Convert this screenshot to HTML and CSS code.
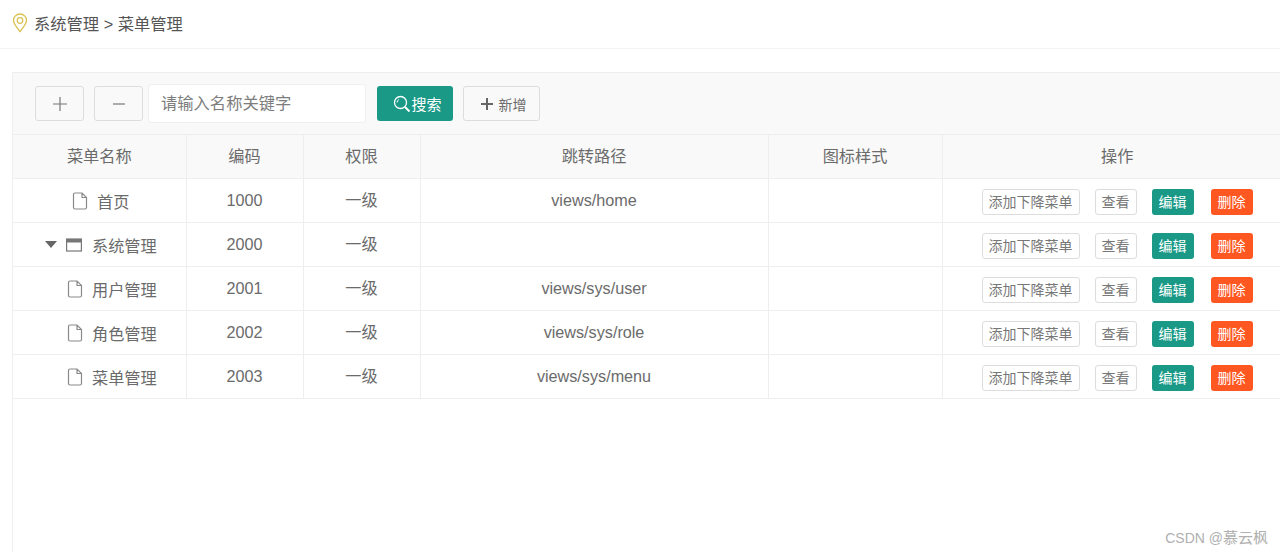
FILE: index.html
```html
<!DOCTYPE html>
<html lang="zh-CN">

<head>
    <meta charset="UTF-8">
    <title>菜单管理</title>
    <link rel="stylesheet" href="styles.css">
</head>

<body>
    <svg class="sprite" width="0" height="0">
        <symbol id="file" viewBox="0 0 16 18">
            <path d="M1.5 2.5a1.5 1.5 0 0 1 1.5-1.5h7l4.5 4.5v10a1.5 1.5 0 0 1-1.5 1.500h-10a1.500 1.500 0 0 1-1.500-1.500z M10 1v4.500h4.500" fill="none" stroke="#8a8a8a" stroke-width="1.200" />
        </symbol>
    </svg>

    <div class="crumb">
        <svg class="pin" width="16" height="20" viewBox="0 0 16 20">
            <path d="M8 18.500C5 14.500 1.500 11 1.500 7.500a6.500 6.500 0 0 1 13 0C14.500 11 11 14.500 8 18.500z" fill="none" stroke="#d9c14f" stroke-width="1.300" />
            <circle cx="8" cy="7.500" r="2.800" fill="none" stroke="#d9c14f" stroke-width="1.200" />
        </svg>
        <span>系统管理 &gt; 菜单管理</span>
    </div>

    <div class="panel">
        <div class="toolbar">
            <button class="btn btn-square">
                <svg width="16" height="16" viewBox="0 0 16 16"><path d="M8 1v14M1 8h14" stroke="#777" stroke-width="1.200" /></svg>
            </button>
            <button class="btn btn-square">
                <svg width="16" height="16" viewBox="0 0 16 16"><path d="M2 8h12" stroke="#777" stroke-width="1.200" /></svg>
            </button>
            <input class="search" type="text" placeholder="请输入名称关键字">
            <button class="btn-search">
                <svg width="18" height="18" viewBox="0 0 18 18">
                    <circle cx="7.500" cy="7.500" r="6" fill="none" stroke="#fff" stroke-width="1.300" />
                    <path d="M12 12l4.500 4.500" stroke="#fff" stroke-width="2" />
                    <path d="M4 7.500a3.500 3.500 0 0 1 2-3" fill="none" stroke="#fff" />
                </svg>
                搜索
            </button>
            <button class="btn btn-add">
                <svg width="14" height="14" viewBox="0 0 14 14"><path d="M7 1v12M1 7h12" stroke="#666" stroke-width="2" /></svg>
                新增
            </button>
        </div>

        <table class="grid">
            <colgroup>
                <col class="c1">
                <col class="c2">
                <col class="c3">
                <col class="c4">
                <col class="c5">
                <col>
            </colgroup>
            <thead>
                <tr>
                    <th>菜单名称</th>
                    <th>编码</th>
                    <th>权限</th>
                    <th>跳转路径</th>
                    <th>图标样式</th>
                    <th class="th-ops">操作</th>
                </tr>
            </thead>
            <tbody>
                <tr>
                    <td><div class="name name-top"><svg class="ico"><use href="#file" /></svg>首页</div></td>
                    <td>1000</td>
                    <td>一级</td>
                    <td>views/home</td>
                    <td></td>
                    <td><div class="ops"><a class="tag">添加下降菜单</a><a class="tag">查看</a><a class="tag tag-green">编辑</a><a class="tag tag-red">删除</a></div></td>
                </tr>
                <tr>
                    <td>
                        <div class="name">
                            <i class="caret"></i>
                            <svg class="ico-win" width="16" height="14" viewBox="0 0 16 14"><rect x="0.600" y="1" width="14.800" height="12" fill="none" stroke="#777" stroke-width="1.200" /><rect x="0.600" y="1" width="14.800" height="3.500" fill="#777" /></svg>
                            系统管理
                        </div>
                    </td>
                    <td>2000</td>
                    <td>一级</td>
                    <td></td>
                    <td></td>
                    <td><div class="ops"><a class="tag">添加下降菜单</a><a class="tag">查看</a><a class="tag tag-green">编辑</a><a class="tag tag-red">删除</a></div></td>
                </tr>
                <tr>
                    <td><div class="name"><svg class="ico"><use href="#file" /></svg>用户管理</div></td>
                    <td>2001</td>
                    <td>一级</td>
                    <td>views/sys/user</td>
                    <td></td>
                    <td><div class="ops"><a class="tag">添加下降菜单</a><a class="tag">查看</a><a class="tag tag-green">编辑</a><a class="tag tag-red">删除</a></div></td>
                </tr>
                <tr>
                    <td><div class="name"><svg class="ico"><use href="#file" /></svg>角色管理</div></td>
                    <td>2002</td>
                    <td>一级</td>
                    <td>views/sys/role</td>
                    <td></td>
                    <td><div class="ops"><a class="tag">添加下降菜单</a><a class="tag">查看</a><a class="tag tag-green">编辑</a><a class="tag tag-red">删除</a></div></td>
                </tr>
                <tr>
                    <td><div class="name"><svg class="ico"><use href="#file" /></svg>菜单管理</div></td>
                    <td>2003</td>
                    <td>一级</td>
                    <td>views/sys/menu</td>
                    <td></td>
                    <td><div class="ops"><a class="tag">添加下降菜单</a><a class="tag">查看</a><a class="tag tag-green">编辑</a><a class="tag tag-red">删除</a></div></td>
                </tr>
            </tbody>
        </table>
    </div>

    <div class="mark"><span class="mark-site">CSDN @</span>慕云枫</div>
</body>

</html>
```

FILE: styles.css
```css
* {
    box-sizing: border-box;
}

html,
body {
    height: 100%;
}

body {
    margin: 0;
    overflow: hidden;
    background-color: #fff;
    color: #6b6b6b;
    font-family: "Liberation Sans", "Noto Sans CJK SC", sans-serif;
    font-size: 16px;
}

.sprite {
    display: block;
}

.crumb {
    display: flex;
    align-items: center;
    height: 49px;
    padding-left: 12px;
    padding-bottom: 2px;
    border-bottom: 1px solid #f3f3f3;
    color: #555;
    font-size: 16.300px;
}

.pin {
    margin-right: 6px;
}

.panel {
    margin-top: 23px;
    margin-left: 12px;
    height: 480px;
    border-left: 1px solid #eee;
}

.toolbar {
    display: flex;
    align-items: center;
    height: 63px;
    padding-left: 22px;
    background-color: #f9f9f9;
    border-top: 1px solid #eee;
    border-bottom: 1px solid #eee;
}

button {
    font-family: inherit;
    padding: 0;
}

.btn {
    display: flex;
    align-items: center;
    justify-content: center;
    height: 35px;
    background-color: #f9f9f9;
    border: 1px solid #ddd;
    border-radius: 3px;
    color: #6b6b6b;
}

.btn-square {
    width: 49px;
    margin-right: 10px;
}

.search {
    width: 218px;
    height: 39px;
    margin-left: -5px;
    padding-left: 12px;
    background-color: #fff;
    border: 1px solid #f0f0f0;
    border-radius: 3px;
    font-family: inherit;
    font-size: 16.300px;
    outline: none;
}

.search::placeholder {
    color: #7d7d7d;
}

.btn-search {
    display: flex;
    align-items: center;
    justify-content: center;
    width: 76px;
    height: 35px;
    margin-left: 11px;
    padding-left: 5px;
    background-color: #1a9987;
    border: none;
    border-radius: 3px;
    color: #fff;
    font-size: 15px;
}

.btn-add {
    gap: 5px;
    width: 77px;
    margin-left: 10px;
    padding-left: 3px;
    font-size: 14px;
}

.grid {
    width: 100%;
    border-collapse: collapse;
    table-layout: fixed;
}

.c1 {
    width: 173px;
}

.c2,
.c3 {
    width: 117px;
}

.c4 {
    width: 348px;
}

.c5 {
    width: 174px;
}

th,
td {
    height: 44px;
    padding: 0;
    border-bottom: 1px solid #eee;
    border-left: 1px solid #eee;
    text-align: center;
    font-size: 16.200px;
    font-weight: normal;
    line-height: 20px;
    color: #6b6b6b;
}

th:first-child,
td:first-child {
    border-left: none;
}

th {
    height: 43px;
    background-color: #f9f9f9;
}

.th-ops {
    padding-left: 12px;
}

.name {
    display: flex;
    align-items: center;
    padding-left: 32px;
    padding-top: 4px;
}

.name-top {
    padding-left: 59px;
}

.ico {
    width: 16px;
    height: 18px;
    margin-top: -3px;
    margin-right: 9px;
    margin-left: 22px;
}

.name-top .ico {
    margin-left: 0;
    margin-right: 9px;
}

.caret {
    width: 0;
    height: 0;
    margin-top: -4px;
    margin-right: 9px;
    border-left: 6.500px solid transparent;
    border-right: 6.500px solid transparent;
    border-top: 7px solid #666;
}

.ico-win {
    margin-top: -3px;
    margin-right: 10px;
}

.ops {
    display: flex;
    align-items: center;
    padding-left: 39px;
    padding-top: 3px;
}

.tag {
    height: 26px;
    line-height: 24px;
    margin-right: 15px;
    padding: 0 6px;
    background-color: #fff;
    border: 1px solid #ddd;
    border-radius: 3px;
    font-size: 14px;
    color: #777;
    white-space: nowrap;
}

.tag-green,
.tag-red {
    color: #fff;
    border: none;
    line-height: 26px;
    padding: 0 7px;
}

.tag-green {
    background-color: #1a9987;
}

.tag-red {
    margin-left: 2px;
    background-color: #ff5722;
}

.mark {
    position: absolute;
    right: 12px;
    bottom: 5px;
    color: #b0b0b0;
    font-size: 15px;
}

.mark-site {
    font-size: 14px;
}
```
